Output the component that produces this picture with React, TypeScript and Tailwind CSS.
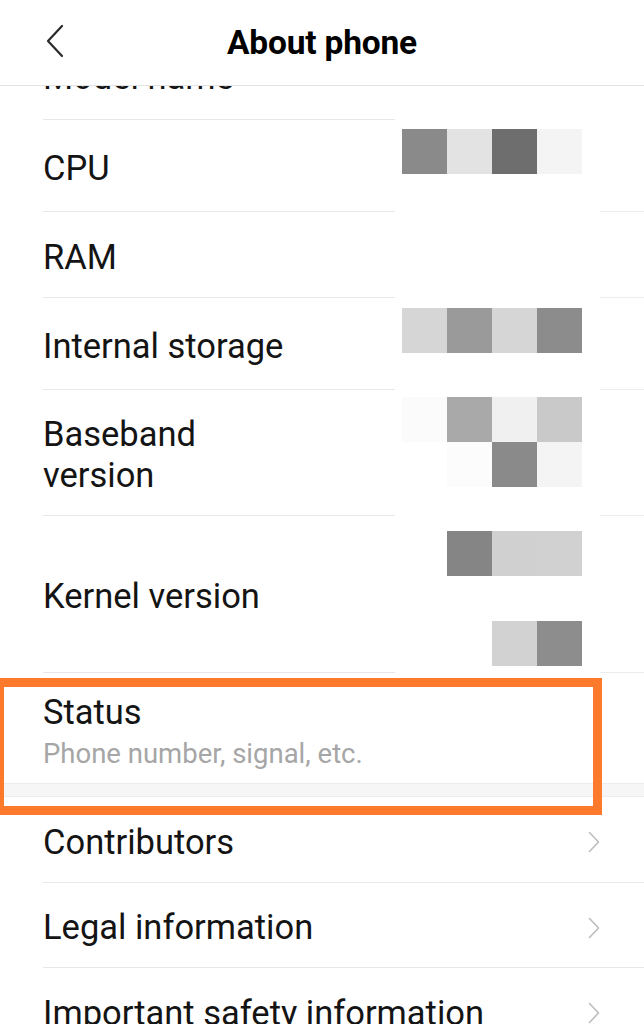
import React from 'react';

// Redacted value cells: 45px squares, 4 columns, laid out row by row.
type Cells = (string | null)[][];

const cpuCells: Cells = [['#8a8a8a', '#e3e3e3', '#6e6e6e', '#f4f4f4']];
const storageCells: Cells = [['#d6d6d6', '#9a9a9a', '#d6d6d6', '#8c8c8c']];
const basebandCells: Cells = [
  ['#fbfbfb', '#a9a9a9', '#f0f0f0', '#c9c9c9'],
  [null, '#fcfcfc', '#8a8a8a', '#f4f4f4'],
];
const kernelCells: Cells = [
  [null, '#858585', '#d0d0d0', '#d1d1d1'],
  [null, null, null, null],
  [null, null, '#d2d2d2', '#8d8d8d'],
];

function Blocks({ cells }: { cells: Cells }) {
  return (
    <div className="flex flex-col">
      {cells.map((row, i) => (
        <div key={i} className="flex">
          {row.map((c, j) => (
            <div key={j} className="w-[45px] h-[45px]" style={{ backgroundColor: c ?? 'transparent' }} />
          ))}
        </div>
      ))}
    </div>
  );
}

function InfoRow({
  label,
  height,
  cells,
  cellsTop = 0,
}: {
  label: React.ReactNode;
  height: string;
  cells?: Cells;
  cellsTop?: number;
}) {
  return (
    <div className={`flex ${height}`}>
      <div className="w-[43px] shrink-0" />
      <div className="w-[352px] shrink-0 flex items-center pt-[5px] border-b border-[#e8e8e8] text-[34.5px] leading-[41px] text-[#141414] whitespace-nowrap">
        {label}
      </div>
      <div className="w-[205px] shrink-0 pl-[7px]" style={{ paddingTop: cellsTop }}>
        {cells && <Blocks cells={cells} />}
      </div>
      <div className="flex-1 border-b border-[#ececec]" />
    </div>
  );
}

function Chevron() {
  return (
    <svg width="12" height="22" viewBox="0 0 12 22" fill="none" className="shrink-0">
      <path d="M1.5 1.5 L10.5 11 L1.5 20.5" stroke="#bdbdbd" strokeWidth="1.6" strokeLinecap="round" strokeLinejoin="round" />
    </svg>
  );
}

function LinkRow({ label, height }: { label: string; height: string }) {
  return (
    <div className={`ml-[43px] ${height} flex items-center justify-between pt-[5px] pr-[44px] border-b border-[#e8e8e8]`}>
      <span className="text-[34.5px] leading-[41px] text-[#141414] whitespace-nowrap">{label}</span>
      <Chevron />
    </div>
  );
}

export default function App() {
  return (
    <div className="relative w-[644px] h-[1024px] overflow-hidden bg-white font-['Roboto',sans-serif]">
      {/* header */}
      <div className="relative h-[86px] flex items-center justify-center border-b border-[#e3e3e3] bg-white">
        <svg width="18" height="34" viewBox="0 0 18 34" fill="none" className="absolute left-[46px] top-[24px]">
          <path d="M16 2 L2 17 L16 32" stroke="#2a2a2a" strokeWidth="2.2" strokeLinecap="round" strokeLinejoin="round" />
        </svg>
        <h1 className="pt-[2px] text-[33.5px] font-bold text-black tracking-[-0.2px]">About phone</h1>
      </div>

      {/* "Model name" row, scrolled mostly under the header */}
      <div className="flex h-[34px]">
        <div className="w-[43px] shrink-0" />
        <div className="w-[352px] shrink-0 overflow-hidden border-b border-[#e8e8e8]">
          <div className="-mt-[26px] text-[34.5px] leading-[34px] text-[#141414]">Model name</div>
        </div>
        <div className="w-[205px] shrink-0" />
        <div className="flex-1" />
      </div>

      <InfoRow label="CPU" height="h-[92px]" cells={cpuCells} cellsTop={9} />
      <InfoRow label="RAM" height="h-[86px]" />
      <InfoRow label="Internal storage" height="h-[92px]" cells={storageCells} cellsTop={10} />
      <InfoRow label={<span>Baseband<br />version</span>} height="h-[126px]" cells={basebandCells} cellsTop={7} />
      <InfoRow label="Kernel version" height="h-[157px]" cells={kernelCells} cellsTop={15} />

      {/* Status */}
      <div className="h-[110px] pl-[43px] pt-[19px] flex flex-col">
        <span className="text-[34.5px] leading-[40px] text-[#141414]">Status</span>
        <span className="mt-[7px] text-[27.5px] leading-[30px] text-[#a6a6a6]">Phone number, signal, etc.</span>
      </div>
      <div className="h-[14px] bg-[#f6f6f6] border-t border-b border-[#ececec]" />

      <LinkRow label="Contributors" height="h-[86px]" />
      <LinkRow label="Legal information" height="h-[85px]" />
      <LinkRow label="Important safety information" height="h-[86px]" />

      {/* highlight frame drawn over the Status row */}
      <div className="absolute left-[-5px] top-[678px] w-[607px] h-[137px] border-[9px] border-[#fd7a2c]" />
    </div>
  );
}
